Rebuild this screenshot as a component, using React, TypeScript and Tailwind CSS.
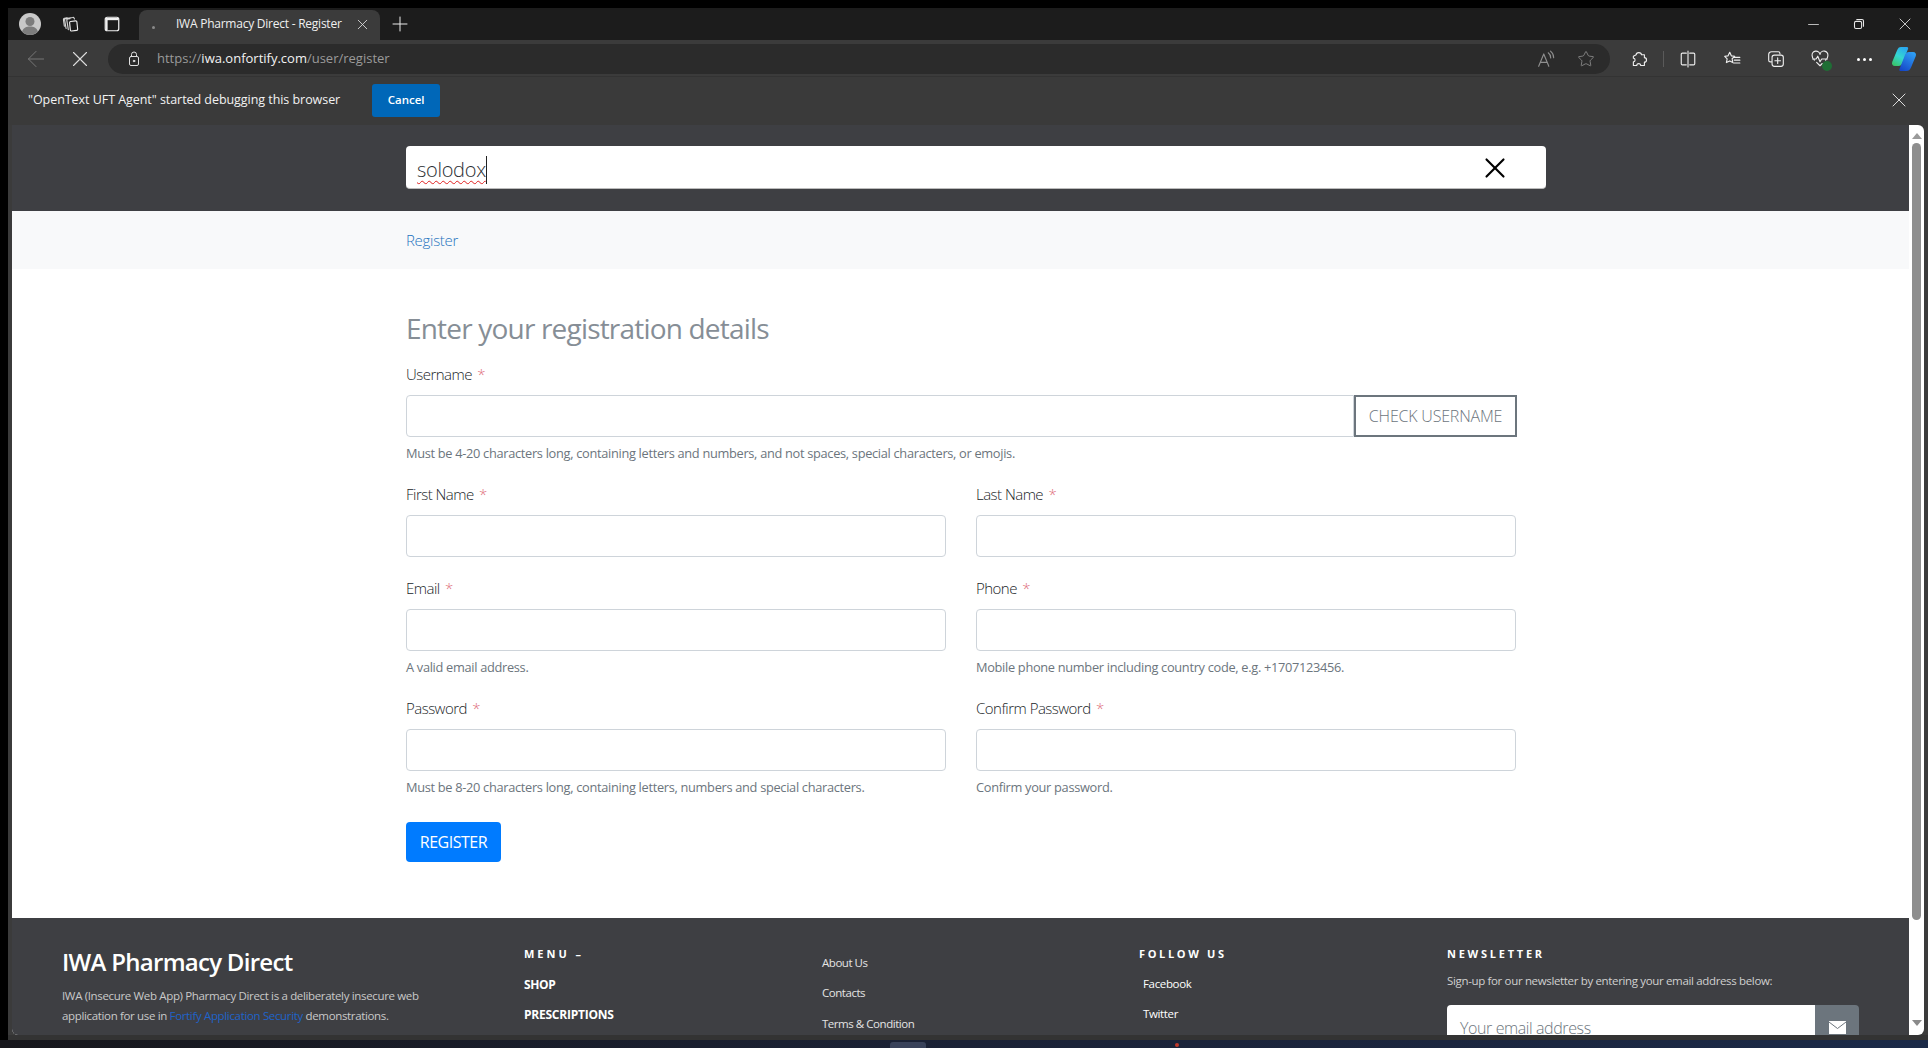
import React from "react";
import { ArrowLeft, X, Plus, Minus, Star } from "lucide-react";

const sw = { fill: "none", stroke: "currentColor", strokeWidth: 1, strokeLinecap: "round", strokeLinejoin: "round" } as const;

function I({ children, s = 16, c = "text-[#d6d6d6]" }: { children: React.ReactNode; s?: number; c?: string }) {
  return (
    <svg width={s} height={s} viewBox="0 0 16 16" {...sw} className={c}>
      {children}
    </svg>
  );
}

function Avatar() {
  return (
    <svg width="22" height="22" viewBox="0 0 22 22">
      <circle cx="11" cy="11" r="11" fill="#c9c9c9" />
      <circle cx="11" cy="8.500" r="4.500" fill="#7d7d7d" />
      <path d="M3 18.500c1.500-4 4.500-5 8-5s6.500 1 8 5a11 11 0 0 1-16 0z" fill="#7d7d7d" />
    </svg>
  );
}

function Copilot() {
  return (
    <svg width="26" height="26" viewBox="0 0 26 26">
      <defs>
        <linearGradient id="cp1" x1="0.700" y1="0" x2="0.200" y2="1">
          <stop offset="0" stopColor="#2aa8f0" />
          <stop offset="0.500" stopColor="#35d6d0" />
          <stop offset="1" stopColor="#39c46a" />
        </linearGradient>
        <linearGradient id="cp2" x1="0.800" y1="0" x2="0.200" y2="1">
          <stop offset="0" stopColor="#2fa0f5" />
          <stop offset="1" stopColor="#1548c8" />
        </linearGradient>
      </defs>
      <path d="M10 1h6c1 0 1.500 1 1 2l-5.500 14c-.8 2-2 3-4 3H4C1.500 20 .5 18 1.200 16L6 4.500C7 2 8 1 10 1z" fill="url(#cp1)" />
      <path d="M18 6h4c2.500 0 3.500 2 2.800 4L20 21.500c-1 2.500-2.500 3.500-4.500 3.500H9.500c-1 0-1.500-1-1-2L14 9c.8-2 2-3 4-3z" fill="url(#cp2)" />
    </svg>
  );
}

function Req({ label }: { label: string }) {
  return (
    <label className="block h-[24px] leading-[22px] mb-[8px] text-[15px] font-light tracking-[-0.035em] text-[#212529]">
      {label} <span className="ml-[2px] text-[#e0707c]">*</span>
    </label>
  );
}

const inputCls = "block w-full h-[42px] bg-white border border-[#ced4da] rounded-[4px]";

function Field({ label, help }: { label: string; help?: string }) {
  return (
    <div className="w-[540px]">
      <Req label={label} />
      <input className={inputCls} />
      {help ? <p className="mt-[6px] h-[20px] leading-[20px] text-[12.800px] tracking-[-0.024em] text-[#6c757d]">{help}</p> : null}
    </div>
  );
}

export default function App() {
  return (
    <div className="w-[1928px] h-[1048px] overflow-hidden bg-black pt-[8px] flex flex-col font-['Open_Sans',sans-serif]">
      {/* Tab strip */}
      <div className="h-[32px] shrink-0 ml-[8px] bg-[#1c1c1c] flex items-center text-[#d6d6d6]">
        <div className="ml-[11px] w-[22px]"><Avatar /></div>
        <div className="ml-[20px]">
          <I s={18}>
            <rect x="8" y="5.500" width="6.500" height="8.500" rx="1" transform="rotate(-6 11 10)" stroke="#f0f0f0" />
            <path d="M8 3.200l-2 .4a1 1 0 0 0-.8 1.200L6.500 13M12 3.500l-.4-.8a1 1 0 0 0-1.200-.5L4 3.200a1 1 0 0 0-.8 1.200L4.500 12" />
            <path d="M5.500 2.500l-2.500.5a1 1 0 0 0-.8 1.200L3 10" />
          </I>
        </div>
        <div className="ml-[24px]">
          <I s={18} c="text-[#f0f0f0]">
            <rect x="2" y="2" width="12" height="12" rx="1.800" strokeWidth="1.100" />
            <path d="M2.500 3.600h11" strokeWidth="2" strokeLinecap="butt" />
            <path d="M3.300 3v10.500" strokeWidth="1.600" strokeLinecap="butt" />
          </I>
        </div>
        <div className="ml-[18px] self-end h-[30px] w-[241px] rounded-t-[8px] bg-[#3b3b3b] flex items-center relative pb-[2px]">
          <span className="absolute left-[13px] top-[16px] w-[3px] h-[3px] rounded-full bg-[#8a8a8a]" />
          <span className="ml-[37px] w-[178px] text-[12px] tracking-[-0.02em] text-[#f0f0f0] whitespace-nowrap">IWA Pharmacy Direct - Register</span>
          <X size={17} strokeWidth={1.2} className="text-[#e0e0e0]" />
        </div>
        <Plus size={24} strokeWidth={1} className="ml-[8px] text-[#eaeaea]" />
        <div className="flex-1" />
        <Minus size={17} strokeWidth={1.1} className="text-[#e8e8e8]" />
        <div className="ml-[31px]">
          <I s={12} c="text-[#e8e8e8]">
            <rect x="2" y="4.500" width="9.500" height="9.500" rx="2" strokeWidth="1.400" />
            <path d="M5 2h7a2 2 0 0 1 2 2v7" strokeWidth="1.400" />
          </I>
        </div>
        <X size={20} strokeWidth={1} className="ml-[30px] mr-[13px] text-[#e8e8e8]" />
      </div>

      {/* Toolbar */}
      <div className="h-[36px] shrink-0 ml-[8px] bg-[#3b3b3b] pt-[2px] flex items-center text-[#d6d6d6]">
        <ArrowLeft size={26} strokeWidth={0.9} className="ml-[15px] text-[#777777]" />
        <X size={26} strokeWidth={1} className="ml-[18px] text-[#dddddd]" />
        <div className="ml-[15px] w-[1502px] h-[30px] rounded-full bg-[#2b2b2b] flex items-center">
          <div className="ml-[18px]">
            <I s={16} c="text-[#e0e0e0]">
              <rect x="3.500" y="5.500" width="9" height="9" rx="1.500" />
              <path d="M5.500 5.500V3.500a2.500 2.500 0 0 1 5 0v2" />
              <circle cx="8" cy="10" r="0.800" fill="currentColor" />
            </I>
          </div>
          <span className="ml-[15px] text-[13px] tracking-normal text-[#9a9a9a] whitespace-nowrap">
            https://<span className="text-[#f2f2f2]">iwa.onfortify.com</span>/user/register
          </span>
          <div className="flex-1" />
          <I s={18} c="text-[#8f8f8f]">
            <path d="M1.500 14.500L6 3.500l4.500 11M3 11h6" />
            <path d="M10 2.500c1.300 1 2.200 2.700 2.200 4.500M12 1c1.800 1.400 2.800 3.500 2.800 5.800" />
          </I>
          <Star size={18} strokeWidth={1} className="ml-[22px] mr-[15px] text-[#9a9a9a]" />
        </div>
        <div className="ml-[20px]">
          <I s={18} c="text-[#eeeeee]">
            <path d="M5.500 4.200C5.500 1.800 10 1.500 10.200 4.200H12.800V6.800C15.300 6.800 15.300 10.800 12.800 10.800V13.800H9.500C9.500 11.500 6 11.500 6 13.800H3V10.500C5 10.500 5 7.300 3 7.300V5.500z" />
          </I>
        </div>
        <div className="ml-[15px] w-px h-[16px] bg-[#5a5a5a]" />
        <div className="ml-[15px]">
          <I s={18} c="text-[#eeeeee]">
            <path d="M6.500 2.800H3a1 1 0 0 0-1 1v8.400a1 1 0 0 0 1 1h3.500M9.500 2.800H13a1 1 0 0 1 1 1v8.400a1 1 0 0 1-1 1H9.500M8 1v14" />
          </I>
        </div>
        <div className="ml-[26px]">
          <I s={18} c="text-[#eeeeee]">
            <path d="M6 2l1.400 3.200 3 .4-2.300 2.200.6 3.400L6 9.700 3 11.200l.7-3.400L1.500 5.600l3-.4zM10 6.500h5M10 9h5M9.500 11.500h5.500" />
          </I>
        </div>
        <div className="ml-[26px]">
          <I s={18} c="text-[#eeeeee]">
            <path d="M11.500 3.500V3a1.500 1.500 0 0 0-1.500-1.500H4A2.500 2.500 0 0 0 1.500 4v5A1.500 1.500 0 0 0 3 10.500h1" />
            <rect x="4.500" y="4.500" width="10" height="10" rx="2" />
            <path d="M9.500 7v5M7 9.500h5" />
          </I>
        </div>
        <div className="ml-[26px] relative">
          <I s={18} c="text-[#eeeeee]">
            <path d="M3 9C1.500 7.500 1 6.500 1 5a3.300 3.300 0 0 1 7-1 3.300 3.300 0 0 1 7 1c0 1.500-.5 2.500-2 4M1.500 8h3l1.500-2.500 2 5 1.500-2.500h5M5 11l3 3 2-2" />
          </I>
          <span className="absolute right-[-3px] bottom-[-3px] w-[10px] h-[10px] rounded-full bg-[#1f6e35]" />
        </div>
        <div className="ml-[26px] flex gap-[3px] w-[18px] justify-center">
          <span className="w-[3px] h-[3px] bg-white rounded-full" />
          <span className="w-[3px] h-[3px] bg-white rounded-full" />
          <span className="w-[3px] h-[3px] bg-white rounded-full" />
        </div>
        <div className="ml-[18px]"><Copilot /></div>
      </div>

      {/* Info bar */}
      <div className="h-[49px] shrink-0 ml-[8px] bg-[#3a3a3a] border-t border-[#333333] pb-[2px] flex items-center text-white">
        <span className="ml-[20px] text-[12.500px] tracking-[-0.004em] text-[#f2f2f2] whitespace-nowrap">"OpenText UFT Agent" started debugging this browser</span>
        <button className="ml-[32px] w-[68px] h-[33px] rounded-[3px] bg-[#0067b8] text-[11.500px] font-semibold text-white">Cancel</button>
        <div className="flex-1" />
        <X size={24} strokeWidth={0.9} className="mr-[17px] text-[#eeeeee]" />
      </div>

      {/* Page viewport */}
      <div className="h-[910px] shrink-0 ml-[8px] bg-[#3b3b3b] px-[4px] flex">
        <div className="flex-1 min-w-0 h-[910px] overflow-hidden rounded-bl-[6px] bg-white flex flex-col">
          {/* Search band */}
          <div className="h-[86px] shrink-0 bg-[#3e3f43] pt-[21px] pl-[394px]">
            <div className="w-[1140px] h-[43px] bg-white rounded-[4px] border-b border-[#bbbbbb] flex items-center pl-[11px]">
              <span className="mt-[5px] text-[20px] font-light tracking-[-0.015em] leading-[28px] text-[#2b2f33] underline decoration-wavy decoration-[#e02020] decoration-1 underline-offset-[3px] border-r border-[#222222]">solodox</span>
              <div className="flex-1" />
              <X size={34} strokeWidth={1.5} className="mt-[1px] mr-[34px] text-black" />
            </div>
          </div>
          {/* Breadcrumb */}
          <div className="h-[58px] shrink-0 bg-[#f8f9fa] pl-[394px] pt-[1px] flex items-center">
            <a className="text-[15px] font-light tracking-[-0.02em] text-[#1e73be]">Register</a>
          </div>
          {/* Form */}
          <div className="h-[649px] shrink-0 pl-[394px] pt-[41px] bg-white">
            <h2 className="h-[36px] leading-[36px] text-[28px] tracking-[-0.029em] text-[#868e96]">Enter your registration details</h2>
            <div className="mt-[17px]">
              <Req label="Username" />
              <div className="flex w-[1111px] h-[42px]">
                <input className="w-[948px] h-[42px] bg-white border border-[#ced4da] rounded-l-[4px]" />
                <button className="w-[163px] h-[42px] border-2 border-[#6c757d] text-[16px] font-light tracking-[-0.012em] text-[#6c757d] bg-white">CHECK USERNAME</button>
              </div>
              <p className="mt-[6px] h-[20px] leading-[20px] text-[12.800px] tracking-[-0.024em] text-[#6c757d]">Must be 4-20 characters long, containing letters and numbers, and not spaces, special characters, or emojis.</p>
            </div>
            <div className="mt-[20px] flex gap-[30px]">
              <Field label="First Name" />
              <Field label="Last Name" />
            </div>
            <div className="mt-[20px] flex gap-[30px]">
              <Field label="Email" help="A valid email address." />
              <Field label="Phone" help="Mobile phone number including country code, e.g. +1707123456." />
            </div>
            <div className="mt-[20px] flex gap-[30px]">
              <Field label="Password" help="Must be 8-20 characters long, containing letters, numbers and special characters." />
              <Field label="Confirm Password" help="Confirm your password." />
            </div>
            <button className="mt-[25px] w-[95px] h-[40px] rounded-[4px] bg-[#007bff] text-white text-[16px] tracking-[-0.03em]">REGISTER</button>
          </div>
          {/* Footer */}
          <div className="h-[200px] shrink-0 bg-[#3e3f43] pl-[50px] pt-[27px] flex items-start text-white">
            <div className="w-[462px]">
              <h3 className="h-[34px] leading-[34px] text-[24px] font-semibold tracking-[-0.03em]">IWA Pharmacy Direct</h3>
              <p className="mt-[7px] w-[362px] text-[11.500px] leading-[20px] tracking-[-0.03em] text-[#c9c9c9]">
                IWA (Insecure Web App) Pharmacy Direct is a deliberately insecure web application for use in <span className="text-[#1e63c9]">Fortify Application Security</span> demonstrations.
              </p>
            </div>
            <div className="w-[298px]">
              <div className="h-[18px] leading-[18px] text-[11px] font-bold tracking-[0.27em]">MENU –</div>
              <div className="mt-[12px] text-[12px] font-bold tracking-[-0.03em] leading-[20px]">SHOP</div>
              <div className="mt-[10px] text-[12px] font-bold tracking-[-0.02em] leading-[20px]">PRESCRIPTIONS</div>
            </div>
            <div className="w-[317px] pt-[8px] text-[11.500px] tracking-[-0.04em] text-[#e4e4e4]">
              <div className="leading-[20px]">About Us</div>
              <div className="mt-[10px] leading-[20px]">Contacts</div>
              <div className="mt-[11px] leading-[20px]">Terms &amp; Condition</div>
            </div>
            <div className="w-[308px]">
              <div className="h-[18px] leading-[18px] text-[11px] font-bold tracking-[0.24em]">FOLLOW US</div>
              <div className="mt-[11px] pl-[4px] text-[11.500px] tracking-[-0.03em] leading-[20px]">Facebook</div>
              <div className="mt-[10px] pl-[4px] text-[11.500px] tracking-[-0.03em] leading-[20px]">Twitter</div>
            </div>
            <div className="w-[412px]">
              <div className="h-[18px] leading-[18px] text-[11px] font-bold tracking-[0.25em]">NEWSLETTER</div>
              <div className="mt-[8px] text-[11.500px] tracking-[-0.03em] leading-[20px] text-[#d0d0d0]">Sign-up for our newsletter by entering your email address below:</div>
              <div className="mt-[14px] flex w-[412px] h-[42px]">
                <div className="w-[368px] h-[42px] bg-white rounded-l-[4px] pl-[13px] text-[16px] font-light tracking-[-0.025em] leading-[46px] text-[#6c757d]">Your email address</div>
                <div className="w-[44px] h-[42px] bg-[#6c757d] rounded-r-[4px] flex justify-center pt-[16px]">
                  <svg width="17" height="13" viewBox="0 0 17 13">
                    <rect width="17" height="13" fill="#ffffff" />
                    <path d="M0 1l8.500 6.500L17 1" fill="none" stroke="#6c757d" strokeWidth="1" />
                  </svg>
                </div>
              </div>
            </div>
          </div>
        </div>
        {/* Scrollbar */}
        <div className="w-[15px] h-[910px] shrink-0 bg-white rounded-tr-[6px] rounded-br-[6px] flex flex-col items-center pt-[8px]">
          <span className="w-0 h-0 border-l-[5px] border-r-[5px] border-b-[6px] border-l-transparent border-r-transparent border-b-[#9a9a9a]" />
          <div className="mt-[4px] w-[9px] h-[777px] rounded-full bg-[#8e8e8e]" />
          <span className="mt-[100px] w-0 h-0 border-l-[5px] border-r-[5px] border-t-[6px] border-l-transparent border-r-transparent border-t-[#8a8a8a]" />
        </div>
      </div>

      {/* Frame bottom + taskbar */}
      <div className="h-[5px] shrink-0 ml-[8px] bg-[#333333]" />
      <div className="h-[8px] shrink-0 bg-linear-to-r from-[#17171c] via-[#1b2236] to-[#1b2a48] flex items-start">
        <span className="ml-[890px] mt-[2px] w-[36px] h-[6px] rounded-t-[3px] bg-[#39425a]" />
        <span className="ml-[249px] mt-[3px] w-[4px] h-[4px] rounded-full bg-[#c0392b]" />
      </div>
    </div>
  );
}
